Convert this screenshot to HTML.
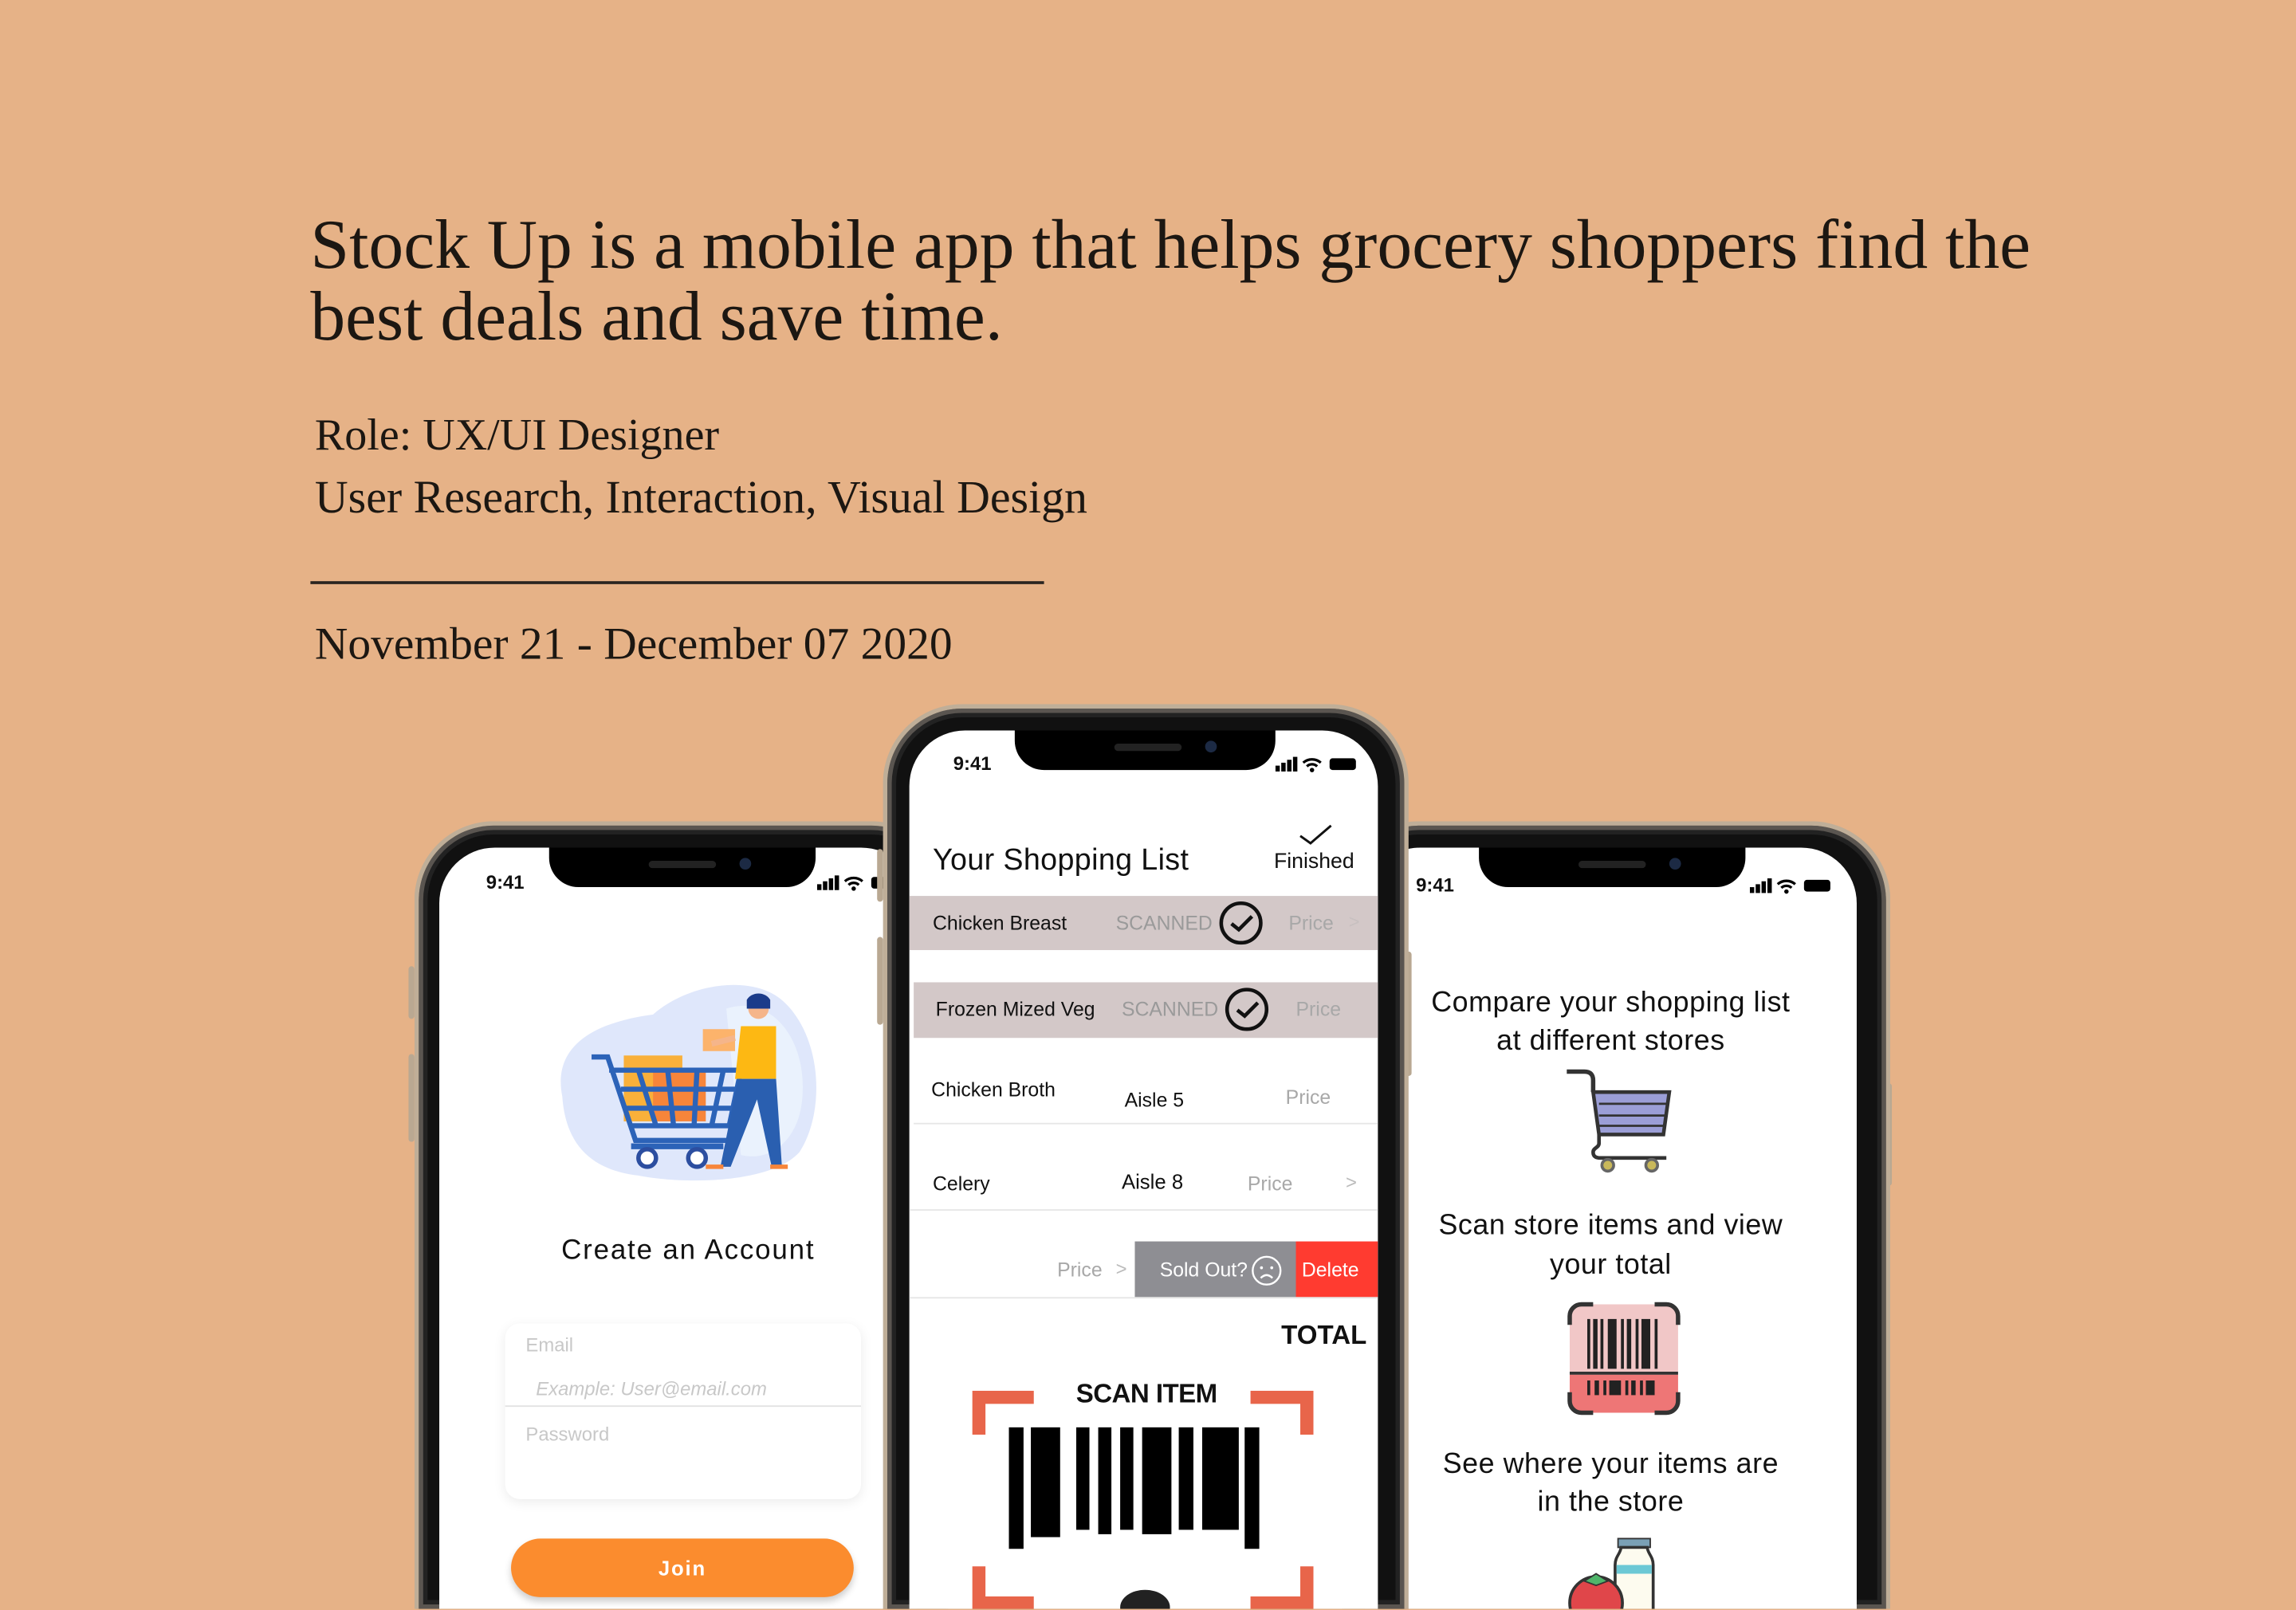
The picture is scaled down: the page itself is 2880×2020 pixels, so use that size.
<!DOCTYPE html>
<html><head><meta charset="utf-8"><style>
html,body{margin:0;padding:0;width:2880px;height:2020px;overflow:hidden;background:#E6B287;}
#w{position:absolute;left:0;top:0;width:1568px;height:1099px;overflow:hidden;transform:scale(1.836735);transform-origin:0 0;}
.serif{position:absolute;font-family:"Liberation Serif",serif;color:#1c1712;white-space:nowrap;}
.phone{position:absolute;box-sizing:border-box;background:#111;border:3px solid #bfae98;border-bottom:none;border-radius:54px 54px 0 0;box-shadow:inset 0 0 0 3px #5a5550,inset 0 0 0 6px #222;}
.screen{position:absolute;background:#fff;border-radius:38px 38px 0 0;overflow:hidden;font-family:"Liberation Sans",sans-serif;color:#111;}
.notch{position:absolute;top:0;width:182px;height:27px;background:#000;border-radius:0 0 20px 20px;}
.notch:before{content:"";position:absolute;left:68px;top:9px;width:46px;height:5px;border-radius:3px;background:#222;}
.notch:after{content:"";position:absolute;left:130px;top:7px;width:8px;height:8px;border-radius:50%;background:#1c2a44;}
.t{position:absolute;white-space:nowrap;}
.time{font-size:13px;font-weight:bold;}
.btn{position:absolute;background:#b9a892;width:4px;border-radius:2px;}
</style></head><body><div id="w">

<div class="serif" style="left:212px;top:143px;font-size:47.7px;line-height:49px;">Stock Up is a mobile app that helps grocery shoppers find the<br>best deals and save time.</div>
<div class="serif" style="left:215px;top:280px;font-size:30.5px;">Role: UX/UI Designer</div>
<div class="serif" style="left:215px;top:322px;font-size:31.5px;">User Research, Interaction, Visual Design</div>
<div style="position:absolute;left:212px;top:397px;width:501px;height:1.5px;background:#2a2520;"></div>
<div class="serif" style="left:215px;top:422px;font-size:31.3px;">November 21 - December 07 2020</div>

<!-- LEFT PHONE -->
<div class="btn" style="left:279px;top:660px;height:36px"></div>
<div class="btn" style="left:279px;top:720px;height:60px"></div>
<div class="phone" style="left:283px;top:561px;width:366px;height:538px;"></div>
<div class="screen" style="left:300px;top:579px;width:326px;height:520px;">
  <div class="notch" style="left:75px"></div>
  <div class="t time" style="left:32px;top:16px">9:41</div>
  <svg style="position:absolute;left:258px;top:18px" width="50" height="12"><rect x="0" y="7" width="3" height="4"/><rect x="4" y="5" width="3" height="6"/><rect x="8" y="3" width="3" height="8"/><rect x="12" y="1" width="3" height="10"/><path d="M19 5a9 9 0 0 1 12 0M21.5 7.5a5 5 0 0 1 7 0" stroke="#000" stroke-width="1.8" fill="none"/><circle cx="25" cy="10" r="1.5"/><rect x="37" y="2" width="14" height="8" rx="2"/></svg>
  <svg style="position:absolute;left:76px;top:90px" width="186" height="142" viewBox="0 0 186 142">
    <path d="M8 80 C0 40 40 28 70 24 C95 2 140 -4 160 16 C185 40 188 90 170 118 C150 140 90 140 60 134 C25 130 10 110 8 80Z" fill="#dfe7fb"/>
    <path d="M120 20 C150 10 175 40 172 80 C170 110 150 125 130 120 Z" fill="#eaf2fd"/>
    <rect x="50" y="52" width="40" height="45" fill="#f9b03a"/><rect x="70" y="62" width="36" height="35" fill="#f7853a"/>
    <path d="M28 53 H39 L58 110 H120 M40 62 H130 L122 100 H56 M48 75 H128 M52 88 H124 M60 62 L72 100 M80 62 L84 100 M100 62 L98 100 M118 62 L110 100" stroke="#2c63b8" stroke-width="3.5" fill="none"/>
    <path d="M55 114 H118" stroke="#2c63b8" stroke-width="4"/>
    <circle cx="66" cy="122" r="6" fill="#fff" stroke="#2c4ea0" stroke-width="3"/><circle cx="100" cy="122" r="6" fill="#fff" stroke="#2c4ea0" stroke-width="3"/>
    <rect x="104" y="34" width="22" height="15" fill="#fcb36b"/>
    <circle cx="142" cy="20" r="7" fill="#f5b58a"/><path d="M134 14 a9 8 0 0 1 16 0 v6 h-16z" fill="#1b3b8a"/>
    <path d="M130 32 h24 v36 h-28z" fill="#fdb813"/><path d="M126 40 l-16 4" stroke="#f5b58a" stroke-width="4"/>
    <path d="M128 68 h26 l4 60 h-7 l-10 -46 l-18 46 h-7z" fill="#2a5fb0"/>
    <path d="M106 128 h12 M150 128 h12" stroke="#f7853a" stroke-width="3"/>
  </svg>
  <div class="t" style="left:0;width:340px;text-align:center;top:265px;font-size:19px;letter-spacing:1px;">Create an Account</div>
  <div style="position:absolute;left:45px;top:325px;width:243px;height:120px;background:#fff;border-radius:10px;box-shadow:0 2px 8px rgba(0,0,0,0.08);"></div>
  <div class="t" style="left:59px;top:332px;font-size:13px;color:#c8c8c8">Email</div>
  <div class="t" style="left:66px;top:362px;font-size:13px;color:#c8c8c8;font-style:italic">Example: User@email.com</div>
  <div style="position:absolute;left:45px;top:381px;width:243px;height:1px;background:#e2e2e2"></div>
  <div class="t" style="left:59px;top:393px;font-size:13px;color:#c8c8c8">Password</div>
  <div style="position:absolute;left:49px;top:472px;width:234px;height:40px;background:#FB8C2E;border-radius:20px;box-shadow:0 3px 5px rgba(0,0,0,0.2);color:#fff;font-weight:bold;font-size:14px;text-align:center;line-height:40px;letter-spacing:1px">Join</div>
</div>

<!-- RIGHT PHONE -->
<div class="btn" style="left:1288px;top:740px;height:70px"></div>
<div class="phone" style="left:915px;top:561px;width:376px;height:538px;"></div>
<div class="screen" style="left:932px;top:579px;width:336px;height:520px;">
  <div class="notch" style="left:78px"></div>
  <div class="t time" style="left:35px;top:18px">9:41</div>
  <svg style="position:absolute;left:263px;top:20px" width="60" height="12"><rect x="0" y="7" width="3" height="4"/><rect x="4" y="5" width="3" height="6"/><rect x="8" y="3" width="3" height="8"/><rect x="12" y="1" width="3" height="10"/><path d="M19 5a9 9 0 0 1 12 0M21.5 7.5a5 5 0 0 1 7 0" stroke="#000" stroke-width="1.8" fill="none"/><circle cx="25" cy="10" r="1.5"/><rect x="37" y="2" width="18" height="8" rx="2"/></svg>
  <div class="t" style="left:0;width:336px;text-align:center;top:93px;font-size:19.5px;line-height:26px;letter-spacing:0.3px">Compare your shopping list<br>at different stores</div>
  <svg style="position:absolute;left:136px;top:150px" width="76" height="76" viewBox="0 0 76 76">
    <path d="M2 3 h12 c4 0 6 2 6 6 v8" stroke="#333" stroke-width="3" fill="none"/>
    <path d="M20 17 H72 L68 46 H24Z" fill="#9b9ed6" stroke="#333" stroke-width="2.5"/>
    <path d="M24 25 H70 M24 33 H69 M24 40 H68" stroke="#333" stroke-width="1.5"/>
    <path d="M24 46 V52 c0 3 -4 3 -4 6 c0 3 2 4 5 4 H70" stroke="#333" stroke-width="2.5" fill="none"/>
    <circle cx="30" cy="67" r="4" fill="#c9b85a" stroke="#666" stroke-width="2"/><circle cx="60" cy="67" r="4" fill="#c9b85a" stroke="#666" stroke-width="2"/>
  </svg>
  <div class="t" style="left:0;width:336px;text-align:center;top:245px;font-size:19.5px;line-height:27px;letter-spacing:0.3px">Scan store items and view<br>your total</div>
  <svg style="position:absolute;left:138px;top:310px" width="78" height="78" viewBox="0 0 78 78">
    <rect x="2" y="2" width="74" height="74" rx="8" fill="#f1c7c7"/>
    <path d="M2 50 H76 V68 a8 8 0 0 1 -8 8 H10 a8 8 0 0 1 -8 -8Z" fill="#ee7676"/>
    <path d="M2 49 H76" stroke="#333" stroke-width="2"/>
    <path d="M2 16 V10 a8 8 0 0 1 8 -8 H18 M60 2 H68 a8 8 0 0 1 8 8 V16 M76 62 V68 a8 8 0 0 1 -8 8 H60 M18 76 H10 a8 8 0 0 1 -8 -8 V62" stroke="#333" stroke-width="3" fill="none"/>
    <g fill="#222"><rect x="14" y="12" width="2" height="34"/><rect x="18" y="12" width="3" height="34"/><rect x="23" y="12" width="2" height="34"/><rect x="28" y="12" width="6" height="34"/><rect x="37" y="12" width="2" height="34"/><rect x="41" y="12" width="3" height="34"/><rect x="47" y="12" width="2" height="34"/><rect x="51" y="12" width="6" height="34"/><rect x="60" y="12" width="2" height="34"/>
    <rect x="14" y="54" width="2" height="10"/><rect x="19" y="54" width="3" height="10"/><rect x="25" y="54" width="2" height="10"/><rect x="29" y="54" width="8" height="10"/><rect x="40" y="54" width="2" height="10"/><rect x="44" y="54" width="3" height="10"/><rect x="50" y="54" width="2" height="10"/><rect x="54" y="54" width="6" height="10"/></g>
  </svg>
  <div class="t" style="left:0;width:336px;text-align:center;top:408px;font-size:19.5px;line-height:26px;letter-spacing:0.3px">See where your items are<br>in the store</div>
  <svg style="position:absolute;left:138px;top:468px" width="70" height="52" viewBox="0 0 70 52">
    <rect x="35" y="4" width="22" height="6" fill="#7aa0b5" stroke="#333"/>
    <path d="M33 22 c0 -6 4 -8 4 -12 h18 c0 4 4 6 4 12 v40 h-26z" fill="#fdfbef" stroke="#333" stroke-width="2"/>
    <path d="M34 22 h24 v6 h-24z" fill="#6cc8d5"/>
    <circle cx="20" cy="48" r="18" fill="#e0464a" stroke="#333" stroke-width="2"/>
    <path d="M12 33 l8 -5 l8 5 l-8 3z" fill="#4fb56a" stroke="#333"/>
  </svg>
</div>

<!-- MIDDLE PHONE -->
<div class="btn" style="left:599px;top:580px;height:36px"></div>
<div class="btn" style="left:599px;top:640px;height:60px"></div>
<div class="btn" style="left:960px;top:650px;height:85px"></div>
<div class="phone" style="left:603px;top:481px;width:359px;height:618px;"></div>
<div class="screen" style="left:621px;top:499px;width:320px;height:600px;">
  <div class="notch" style="left:72px;width:178px"></div>
  <div class="t time" style="left:30px;top:15px">9:41</div>
  <svg style="position:absolute;left:250px;top:17px" width="60" height="12"><rect x="0" y="7" width="3" height="4"/><rect x="4" y="5" width="3" height="6"/><rect x="8" y="3" width="3" height="8"/><rect x="12" y="1" width="3" height="10"/><path d="M19 5a9 9 0 0 1 12 0M21.5 7.5a5 5 0 0 1 7 0" stroke="#000" stroke-width="1.8" fill="none"/><circle cx="25" cy="10" r="1.5"/><rect x="37" y="2" width="18" height="8" rx="2"/></svg>
  <div class="t" style="left:16px;top:77px;font-size:20.5px;letter-spacing:0.2px">Your Shopping List</div>
  <svg style="position:absolute;left:266px;top:63px" width="24" height="16"><path d="M1 9 L8 14 L22 2" stroke="#111" stroke-width="1.6" fill="none"/></svg>
  <div class="t" style="left:249px;top:82px;font-size:14.5px">Finished</div>

  <div style="position:absolute;left:0;top:113px;width:320px;height:37px;background:#D3C8C8"></div>
  <div class="t" style="left:16px;top:124px;font-size:13.5px">Chicken Breast</div>
  <div class="t" style="left:141px;top:124px;font-size:13.5px;color:#9a9a9a">SCANNED</div>
  <svg style="position:absolute;left:211px;top:116px" width="31" height="31"><circle cx="15.5" cy="15.5" r="13.5" fill="none" stroke="#111" stroke-width="2.5"/><path d="M9 16 l5 4 l9 -9" stroke="#111" stroke-width="2.5" fill="none"/></svg>
  <div class="t" style="left:259px;top:124px;font-size:13.5px;color:#a8a8a8">Price</div>
  <div class="t" style="left:300px;top:123px;font-size:13px;color:#c8c0c0">&gt;</div>

  <div style="position:absolute;left:3px;top:172px;width:317px;height:38px;background:#D3C8C8"></div>
  <div class="t" style="left:18px;top:183px;font-size:13.5px">Frozen Mized Veg</div>
  <div class="t" style="left:145px;top:183px;font-size:13.5px;color:#9a9a9a">SCANNED</div>
  <svg style="position:absolute;left:215px;top:175px" width="31" height="31"><circle cx="15.5" cy="15.5" r="13.5" fill="none" stroke="#111" stroke-width="2.5"/><path d="M9 16 l5 4 l9 -9" stroke="#111" stroke-width="2.5" fill="none"/></svg>
  <div class="t" style="left:264px;top:183px;font-size:13.5px;color:#a8a8a8">Price</div>

  <div class="t" style="left:15px;top:238px;font-size:13.5px">Chicken Broth</div>
  <div class="t" style="left:147px;top:245px;font-size:13.5px">Aisle 5</div>
  <div class="t" style="left:257px;top:243px;font-size:13.5px;color:#a8a8a8">Price</div>
  <div style="position:absolute;left:3px;top:268px;width:317px;height:1px;background:#e6e6e6"></div>

  <div class="t" style="left:16px;top:302px;font-size:13.5px">Celery</div>
  <div class="t" style="left:145px;top:300px;font-size:14px">Aisle 8</div>
  <div class="t" style="left:231px;top:302px;font-size:13.5px;color:#a8a8a8">Price</div>
  <div class="t" style="left:298px;top:301px;font-size:13px;color:#bbb">&gt;</div>
  <div style="position:absolute;left:0;top:327px;width:320px;height:1px;background:#e6e6e6"></div>

  <div class="t" style="left:101px;top:361px;font-size:13.5px;color:#a8a8a8">Price</div>
  <div class="t" style="left:141px;top:360px;font-size:13px;color:#bbb">&gt;</div>
  <div style="position:absolute;left:154px;top:349px;width:110px;height:38px;background:#8E8E93"></div>
  <div class="t" style="left:171px;top:361px;font-size:13.5px;color:#fff">Sold Out?</div>
  <svg style="position:absolute;left:233px;top:358px" width="22" height="22"><circle cx="11" cy="11" r="9.5" fill="none" stroke="#fff" stroke-width="1.3"/><circle cx="7.5" cy="9" r="1" fill="#fff"/><circle cx="14.5" cy="9" r="1" fill="#fff"/><path d="M7 16 q4 -4 8 0" stroke="#fff" stroke-width="1.3" fill="none"/></svg>
  <div style="position:absolute;left:264px;top:349px;width:56px;height:38px;background:#FF3B30"></div>
  <div class="t" style="left:268px;top:361px;font-size:13.5px;color:#fff">Delete</div>
  <div style="position:absolute;left:0;top:387px;width:320px;height:1px;background:#e6e6e6"></div>

  <div class="t" style="left:254px;top:403px;font-size:18px;font-weight:bold">TOTAL</div>
  <div class="t" style="left:0;width:324px;text-align:center;top:443px;font-size:18px;font-weight:bold;letter-spacing:-0.3px">SCAN ITEM</div>
  <svg style="position:absolute;left:43px;top:451px" width="233" height="149"><g stroke="#E8654A" stroke-width="9" fill="none"><path d="M4.5 30 V4.5 H42 M190 4.5 H228.5 V30 M4.5 120 V145 H42 M190 145 H228.5 V120"/></g>
  <g fill="#000"><rect x="25" y="25" width="10" height="83"/><rect x="40" y="25" width="20" height="75"/><rect x="71" y="25" width="9" height="70"/><rect x="86" y="25" width="9" height="73"/><rect x="101" y="25" width="9" height="70"/><rect x="116" y="25" width="20" height="73"/><rect x="141" y="25" width="10" height="70"/><rect x="157" y="25" width="25" height="70"/><rect x="186" y="25" width="10" height="83"/></g>
  <ellipse cx="118" cy="148" rx="17" ry="12" fill="#222"/></svg>
</div>

</div></body></html>
